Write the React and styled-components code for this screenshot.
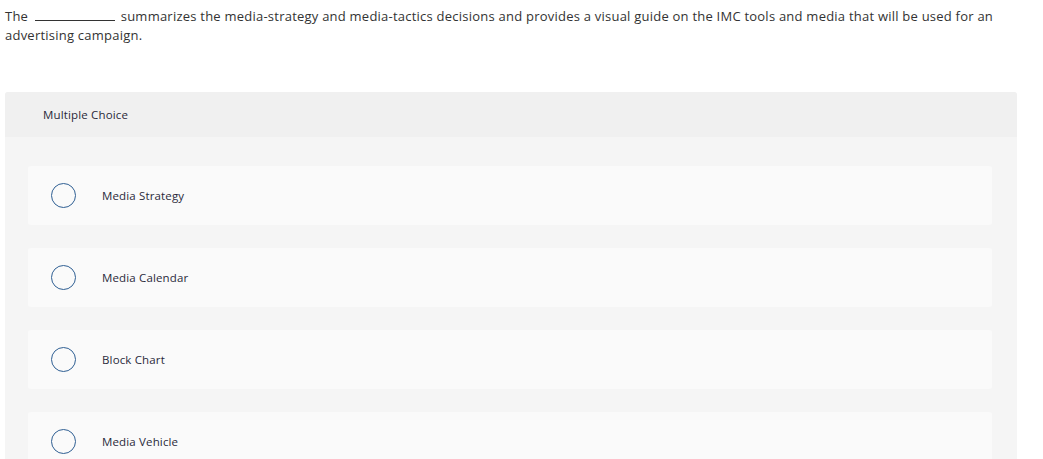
import React from 'react'
import styled, { createGlobalStyle } from 'styled-components'

const GlobalStyle = createGlobalStyle`
  body {
    margin: 0;
    background: #fff;
    font-family: "Open Sans", Lato, sans-serif;
    color: #333;
  }
`

const Page = styled.div`
  padding: 7px 26px 0 5px;
`

const Prompt = styled.p`
  margin: 0;
  font-size: 13px;
  line-height: 19px;
  letter-spacing: 0.23px;
  color: #333;
`

const Blank = styled.span`
  display: inline-block;
  width: 80px;
  border-bottom: 1px solid #333;
  margin: 0 2px 0 7px;
  vertical-align: baseline;
`

const Panel = styled.section`
  margin-top: 47px;
  background: #f5f5f5;
  border-radius: 3px 3px 0 0;
`

const Header = styled.div`
  height: 45px;
  display: flex;
  align-items: center;
  padding-left: 38px;
  background: #f0f0f0;
  border-radius: 3px 3px 0 0;
  font-size: 11.5px;
  letter-spacing: 0.15px;
  color: #2a2a3a;
`

const Options = styled.div`
  display: flex;
  flex-direction: column;
  gap: 23px;
  padding: 29px 25px 30px 23px;
`

const Option = styled.label`
  height: 59px;
  display: flex;
  align-items: center;
  background: #fafafa;
  border-radius: 3px;
  padding-left: 23px;
  font-size: 11.5px;
  letter-spacing: 0.15px;
  color: #2a2a3a;
  cursor: pointer;
`

const Radio = styled.span`
  width: 23px;
  height: 23px;
  border: 1.5px solid #2f5f93;
  border-radius: 50%;
  margin-right: 26px;
  flex-shrink: 0;
`

const choices = ['Media Strategy', 'Media Calendar', 'Block Chart', 'Media Vehicle']

const App = () => {
  return (
    <Page>
      <GlobalStyle />
      <Prompt>
        The<Blank /> summarizes the media-strategy and media-tactics decisions and provides a
        visual guide on the IMC tools and media that will be used for an advertising campaign.
      </Prompt>
      <Panel>
        <Header>Multiple Choice</Header>
        <Options>
          {choices.map((c) => (
            <Option key={c}>
              <Radio />
              {c}
            </Option>
          ))}
        </Options>
      </Panel>
    </Page>
  )
}

export default App
